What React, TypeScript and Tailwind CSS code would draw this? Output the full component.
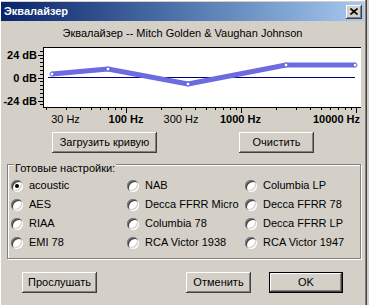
import type { ReactNode } from "react";

const BEVEL =
  "shadow-[inset_-1px_-1px_#404040,inset_1px_1px_#ffffff,inset_-2px_-2px_#808080,inset_2px_2px_#d4d0c8]";

const PRESETS = [
  ["acoustic", "NAB", "Columbia LP"],
  ["AES", "Decca FFRR Micro", "Decca FFRR 78"],
  ["RIAA", "Columbia 78", "Decca FFRR LP"],
  ["EMI 78", "RCA Victor 1938", "RCA Victor 1947"],
];

const CURVE: [number, number][] = [
  [52, 74],
  [108, 69],
  [188, 84],
  [286, 65],
  [355, 65],
];

function dbY(db: number) {
  return 77.5 - (db * 23) / 24;
}

function hzX(f: number) {
  return 126 + 115 * Math.log10(f / 100);
}

function Button({ children, className }: { children: ReactNode; className: string }) {
  return (
    <button
      className={`h-[21px] bg-[#d4d0c8] text-[11px] text-black flex items-center justify-center ${BEVEL} ${className}`}
    >
      {children}
    </button>
  );
}

function Radio({ label, checked }: { label: string; checked?: boolean }) {
  return (
    <div className="h-[19px] flex items-center gap-[6px]">
      <span className="relative w-[12px] h-[12px] rounded-full bg-white shadow-[inset_1px_1px_#808080,inset_-1px_-1px_#ffffff,inset_2px_2px_#404040,inset_-2px_-2px_#d4d0c8] flex items-center justify-center">
        {checked && <span className="w-[4px] h-[4px] rounded-full bg-black" />}
      </span>
      <span className="text-[11px] text-black whitespace-nowrap">{label}</span>
    </div>
  );
}

function Chart() {
  const freqs: number[] = [];
  for (const dec of [10, 100, 1000]) {
    for (let i = dec === 10 ? 2 : 1; i < 10; i++) freqs.push(i * dec);
  }
  freqs.push(10000);
  const dbs: number[] = [];
  for (let d = -28; d <= 28; d += 4) dbs.push(d);

  return (
    <svg width={366} height={86} viewBox="0 40 366 86" className="block">
      <rect x={44} y={47} width={317} height={60} fill="#ffffff" />
      <line x1={44} y1={47.5} x2={361} y2={47.5} stroke="#000" />
      <line x1={43.5} y1={47} x2={43.5} y2={108} stroke="#000" />
      <line x1={43} y1={107.5} x2={361} y2={107.5} stroke="#000" />
      {dbs.map((d) => {
        const major = d % 24 === 0;
        const y = Math.round(dbY(d)) + 0.5;
        return <line key={d} x1={major ? 38 : 40} y1={y} x2={43} y2={y} stroke="#000" />;
      })}
      {freqs.map((f) => {
        const major = f === 100 || f === 1000 || f === 10000;
        const x = Math.round(hzX(f)) + 0.5;
        return <line key={f} x1={x} y1={108} x2={x} y2={major ? 113 : 110} stroke="#000" />;
      })}
      <line x1={48} y1={77.5} x2={355} y2={77.5} stroke="#000080" />
      <polyline
        points={CURVE.map((p) => p.join(",")).join(" ")}
        fill="none"
        stroke="#6c6ce0"
        strokeWidth={5}
        strokeLinejoin="round"
      />
      {CURVE.map(([x, y]) => (
        <circle key={x} cx={x} cy={y} r={2} fill="#fff" stroke="#5a5ad0" strokeWidth={1} />
      ))}
      <g fontSize={11} fontWeight="bold" fill="#000" textAnchor="end">
        <text x={37} y={dbY(24) + 4}>24 dB</text>
        <text x={37} y={dbY(0) + 4}>0 dB</text>
        <text x={37} y={dbY(-24) + 4}>-24 dB</text>
      </g>
      <g fontSize={11} fill="#000" textAnchor="middle">
        <text x={65.5} y={123}>30 Hz</text>
        <text x={126} y={123} fontWeight="bold">100 Hz</text>
        <text x={181} y={123}>300 Hz</text>
        <text x={240.5} y={123} fontWeight="bold">1000 Hz</text>
        <text x={360} y={123} fontWeight="bold" textAnchor="end">10000 Hz</text>
      </g>
    </svg>
  );
}

export default function App() {
  return (
    <div className="w-[369px] h-[305px] bg-[#d4d0c8] overflow-hidden font-['Liberation_Sans',Arial,sans-serif] text-black">
      <div className="w-[367px] h-[305px] border-r border-[#404040] shadow-[inset_1px_1px_#ffffff]">
        <div className="h-[305px] border-r border-[#808080] pt-[2px] flex flex-col">
          {/* title bar */}
          <div className="ml-[1px] mr-[1px] h-[19px] bg-gradient-to-r from-[#0a246a] to-[#a6caf0] flex items-center justify-between pl-[3px] pr-[2px]">
            <span className="text-[11px] font-bold text-white">Эквалайзер</span>
            <span className={`w-[16px] h-[14px] bg-[#d4d0c8] flex items-center justify-center ${BEVEL}`}>
              <svg width={8} height={7} viewBox="0 0 8 7">
                <path d="M0.5 0.5 L7.5 6.5 M7.5 0.5 L0.5 6.5" stroke="#000" strokeWidth={1.6} />
              </svg>
            </span>
          </div>

          <div className="mt-[5px] h-[14px] flex items-center justify-center text-[11px]">
            Эквалайзер -- Mitch Golden &amp; Vaughan Johnson
          </div>

          <Chart />

          <div className="mt-[6px] flex">
            <Button className="ml-[52px] w-[105px]">Загрузить кривую</Button>
            <Button className="ml-[82px] w-[75px]">Очистить</Button>
          </div>

          <div className="mt-[11px] ml-[7px] relative w-[354px] h-[95px] border border-[#808080] shadow-[inset_1px_1px_#ffffff,1px_1px_#ffffff]">
            <span className="absolute left-[6px] top-[-4px] px-[1px] bg-[#d4d0c8] text-[11px] leading-[14px]">
              Готовые настройки:
            </span>
            <div className="pt-[11px] pl-[3px] grid grid-cols-[116px_118px_1fr]">
              {PRESETS.map((row, r) =>
                row.map((name, c) => <Radio key={`${r}-${c}`} label={name} checked={name === "acoustic"} />)
              )}
            </div>
          </div>

          <div className="mt-[13px] flex">
            <Button className="ml-[22px] w-[75px]">Прослушать</Button>
            <Button className="ml-[89px] w-[65px]">Отменить</Button>
            <Button className="ml-[18px] w-[74px] border border-black">OK</Button>
          </div>
        </div>
      </div>
    </div>
  );
}
